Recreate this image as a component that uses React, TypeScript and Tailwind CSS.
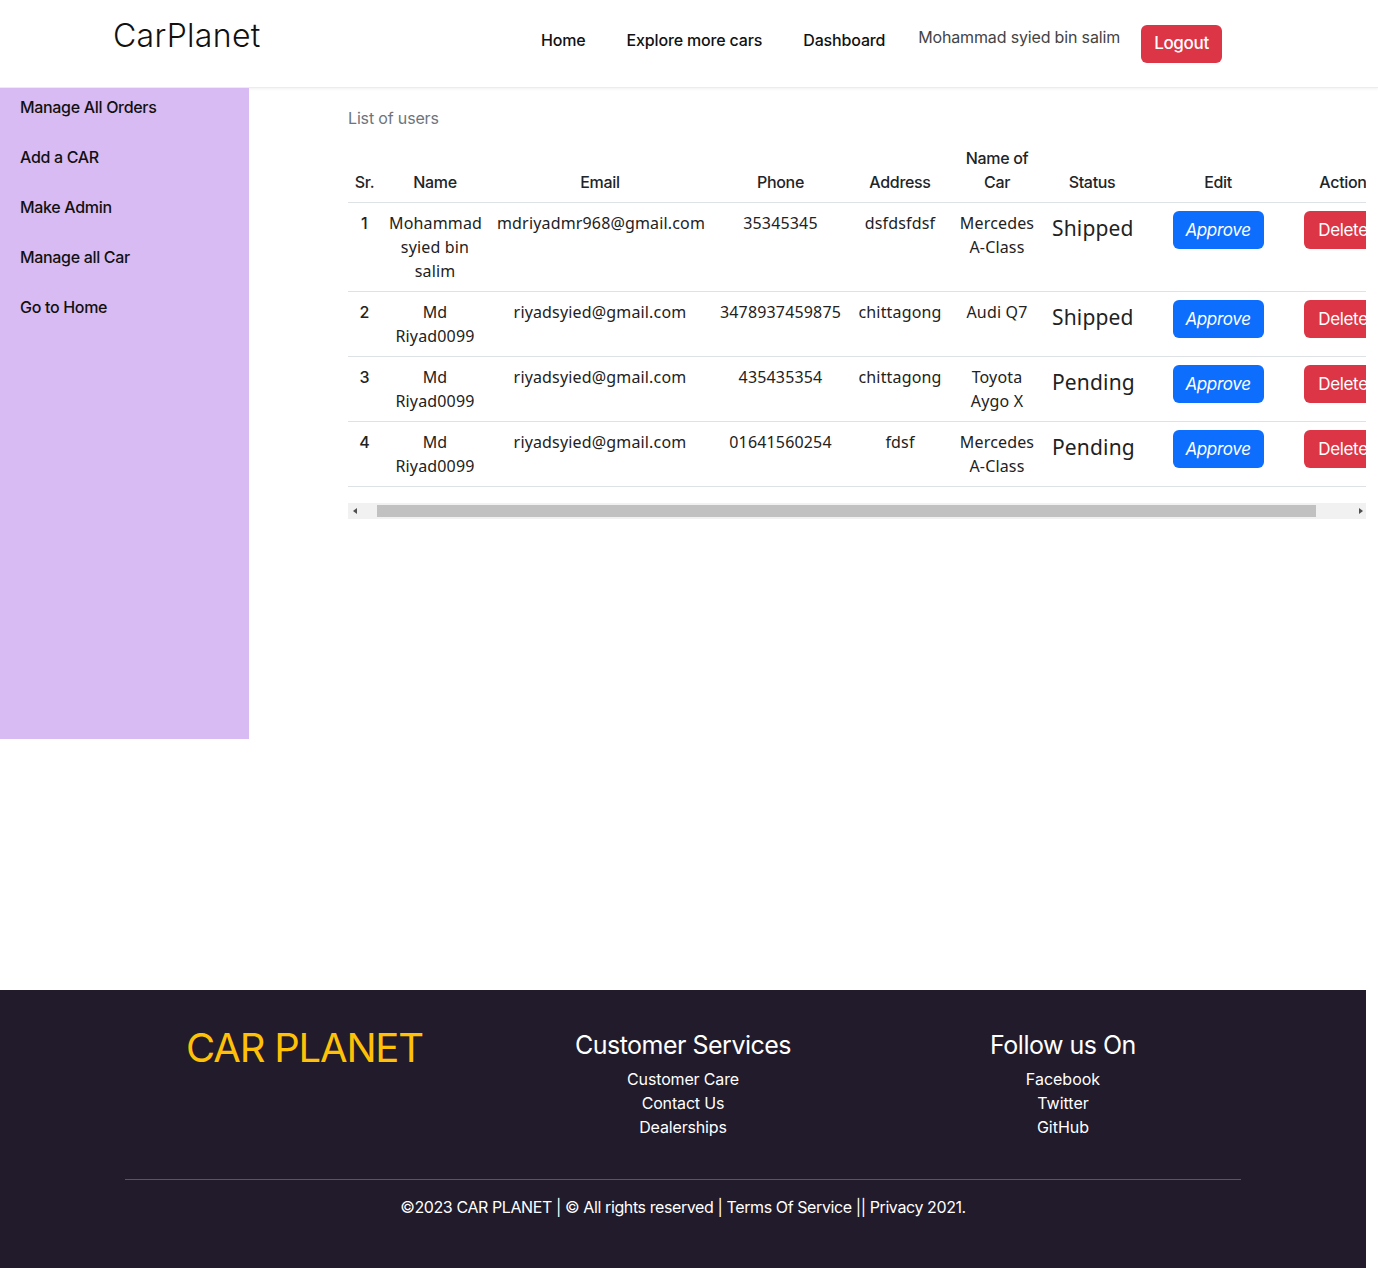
const navLinks = ["Home", "Explore more cars", "Dashboard"];

const sideLinks = [
  "Manage All Orders",
  "Add a CAR",
  "Make Admin",
  "Manage all Car",
  "Go to Home",
];

interface Order {
  name: string[];
  email: string;
  phone: string;
  address: string;
  car: string[];
  status: string;
}

const orders: Order[] = [
  {
    name: ["Mohammad", "syied bin", "salim"],
    email: "mdriyadmr968@gmail.com",
    phone: "35345345",
    address: "dsfdsfdsf",
    car: ["Mercedes", "A-Class"],
    status: "Shipped",
  },
  {
    name: ["Md", "Riyad0099"],
    email: "riyadsyied@gmail.com",
    phone: "3478937459875",
    address: "chittagong",
    car: ["Audi Q7"],
    status: "Shipped",
  },
  {
    name: ["Md", "Riyad0099"],
    email: "riyadsyied@gmail.com",
    phone: "435435354",
    address: "chittagong",
    car: ["Toyota", "Aygo X"],
    status: "Pending",
  },
  {
    name: ["Md", "Riyad0099"],
    email: "riyadsyied@gmail.com",
    phone: "01641560254",
    address: "fdsf",
    car: ["Mercedes", "A-Class"],
    status: "Pending",
  },
];

const Header = () => (
  <header className="flex h-[88px] items-start border-b border-[#ececec] shadow-[0_1px_3px_rgba(0,0,0,0.06)]">
    <div className="ml-[113px] mt-[20px] w-[380px] text-[32px] font-light leading-[32px] tracking-[0.01em] text-[#111]">
      CarPlanet
    </div>
    <nav className="ml-[48px] flex items-start">
      {navLinks.map((link, i) => (
        <a
          key={link}
          className={`mt-[28px] text-[16px] font-medium leading-[24px] tracking-[-0.01em] text-[#111] ${
            i === 0 ? "" : "ml-[41px]"
          }`}
        >
          {link}
        </a>
      ))}
      <span className="ml-[33px] mt-[25px] text-[16px] leading-[24px] tracking-[-0.01em] text-[#444]">
        Mohammad syied bin salim
      </span>
      <button className="ml-[21px] mt-[25px] h-[38px] w-[81px] rounded-[6px] bg-[#dc3545] text-[17px] font-medium tracking-[-0.02em] text-white">
        Logout
      </button>
    </nav>
  </header>
);

const Sidebar = () => (
  <aside className="h-[651px] w-[249px] shrink-0 bg-[#d9bbf3] pt-[7px]">
    {sideLinks.map((link) => (
      <div
        key={link}
        className="flex h-[50px] items-start pl-[20px] text-[16px] font-medium leading-[24px] tracking-[-0.02em] text-[#111]"
      >
        {link}
      </div>
    ))}
  </aside>
);

const Lines = ({ lines }: { lines: string[] }) => (
  <>
    {lines.map((l, i) => (
      <div key={i}>{l}</div>
    ))}
  </>
);

const cellCls = "border-b border-[#dee2e6] px-[8px] pt-[8px] pb-[8px] align-top";
const headCls = "border-b border-[#dee2e6] px-[4px] py-[8px] align-bottom font-medium";

const OrdersTable = () => (
  <div className="w-[1018px] overflow-hidden">
    <div className="py-[8px] text-[16px] leading-[24px] tracking-[-0.01em] text-[#6c757d]">
      List of users
    </div>
    <table className="w-[1042px] table-fixed border-collapse text-center text-[16px] leading-[24px] text-[#212529]">
      <colgroup>
        <col className="w-[33px]" />
        <col className="w-[108px]" />
        <col className="w-[222px]" />
        <col className="w-[139px]" />
        <col className="w-[100px]" />
        <col className="w-[94px]" />
        <col className="w-[96px]" />
        <col className="w-[156px]" />
        <col className="w-[94px]" />
      </colgroup>
      <thead>
        <tr className="tracking-[-0.02em]">
          {["Sr.", "Name", "Email", "Phone", "Address"].map((h) => (
            <th key={h} className={headCls}>
              {h}
            </th>
          ))}
          <th className={headCls}>
            <div>Name of</div>
            <div>Car</div>
          </th>
          {["Status", "Edit", "Action"].map((h) => (
            <th key={h} className={headCls}>
              {h}
            </th>
          ))}
        </tr>
      </thead>
      <tbody className="font-['Noto_Sans',sans-serif] tracking-[0.01em] text-[#222]">
        {orders.map((o, i) => (
          <tr key={i}>
            <td className={`${cellCls} font-['Inter',sans-serif] font-medium`}>{i + 1}</td>
            <td className={cellCls}>
              <Lines lines={o.name} />
            </td>
            <td className={cellCls}>{o.email}</td>
            <td className={cellCls}>{o.phone}</td>
            <td className={cellCls}>{o.address}</td>
            <td className={cellCls}>
              <Lines lines={o.car} />
            </td>
            <td className={`${cellCls} pt-[10px] text-[21px] leading-[30px]`}>{o.status}</td>
            <td className={cellCls}>
              <button className="h-[38px] w-[91px] rounded-[6px] bg-[#0d6efd] font-['Inter',sans-serif] text-[17px] italic tracking-[-0.02em] text-white">
                Approve
              </button>
            </td>
            <td className={cellCls}>
              <button className="h-[38px] w-[78px] rounded-[6px] bg-[#dc3545] font-['Inter',sans-serif] text-[17px] tracking-[-0.02em] text-white">
                Delete
              </button>
            </td>
          </tr>
        ))}
      </tbody>
    </table>
    {/* horizontal scrollbar, drawn */}
    <div className="mt-[16px] flex h-[16px] items-center bg-[#f1f1f1]">
      <svg width="14" height="16" viewBox="0 0 14 16" className="shrink-0">
        <path d="M9 5 L5 8 L9 11 Z" fill="#505050" />
      </svg>
      <div className="w-[15px] shrink-0" />
      <div className="h-[12px] w-[939px] shrink-0 bg-[#c1c1c1]" />
      <div className="flex-1" />
      <svg width="14" height="16" viewBox="0 0 14 16" className="shrink-0">
        <path d="M7 5 L11 8 L7 11 Z" fill="#505050" />
      </svg>
    </div>
  </div>
);

const Footer = () => (
  <footer className="h-[278px] w-[1366px] bg-[#211b2b] pt-[34px] text-white">
    <div className="flex">
      <div className="w-[496px] pl-[186px] text-[40px] leading-[48px] tracking-[-0.03em] text-[#ffc107]">
        CAR PLANET
      </div>
      <div className="flex w-[374px] flex-col items-center pt-[6px]">
        <div className="text-[25px] leading-[30px] tracking-[-0.02em]">Customer Services</div>
        <div className="mt-[7px] text-[16px] leading-[24px] tracking-[-0.01em]">Customer Care</div>
        <div className="text-[16px] leading-[24px] tracking-[-0.01em]">Contact Us</div>
        <div className="text-[16px] leading-[24px] tracking-[-0.01em]">Dealerships</div>
      </div>
      <div className="ml-[6px] flex w-[374px] flex-col items-center pt-[6px]">
        <div className="text-[25px] leading-[30px] tracking-[-0.02em]">Follow us On</div>
        <div className="mt-[7px] text-[16px] leading-[24px]">Facebook</div>
        <div className="text-[16px] leading-[24px]">Twitter</div>
        <div className="text-[16px] leading-[24px]">GitHub</div>
      </div>
    </div>
    <div className="mx-[125px] mt-[40px] w-[1116px] border-t border-[#5a5560]" />
    <div className="mt-[15px] text-center text-[16px] leading-[24px] tracking-[-0.025em]">
      ©2023 CAR PLANET | © All rights reserved | Terms Of Service || Privacy 2021.
    </div>
  </footer>
);

const App = () => (
  <div className="min-h-[1268px] w-[1378px] bg-white font-['Inter',sans-serif]">
    <Header />
    <div className="flex h-[902px]">
      <Sidebar />
      <main className="pl-[99px] pt-[10px]">
        <OrdersTable />
      </main>
    </div>
    <Footer />
  </div>
);

export default App;
